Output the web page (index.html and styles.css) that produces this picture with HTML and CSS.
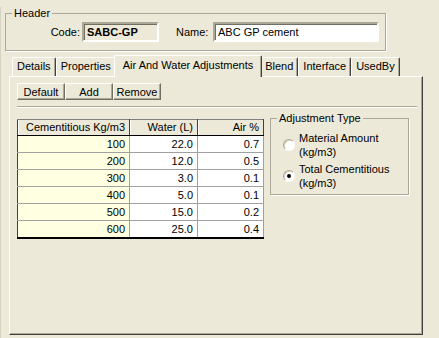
FILE: index.html
```html
<!DOCTYPE html>
<html lang="en">
<head>
    <meta charset="UTF-8">
    <title>Mix Design - SABC-GP</title>
    <link rel="stylesheet" href="styles.css">
</head>
<body>
    <div class="window">
        <fieldset class="group header-group">
            <legend>Header</legend>
            <div class="header-row">
                <span class="field-label code-label">Code:</span>
                <div class="textbox code-box">SABC-GP</div>
                <span class="field-label name-label">Name:</span>
                <div class="textbox name-box">ABC GP cement</div>
            </div>
        </fieldset>

        <div class="tabs">
            <div class="tab">Details</div>
            <div class="tab">Properties</div>
            <div class="tab active">Air And Water Adjustments</div>
            <div class="tab">Blend</div>
            <div class="tab">Interface</div>
            <div class="tab">UsedBy</div>
        </div>

        <div class="panel">
            <div class="toolbar">
                <button class="tool-btn">Default</button>
                <button class="tool-btn">Add</button>
                <button class="tool-btn">Remove</button>
            </div>
            <div class="separator"></div>

            <div class="content">
                <table class="grid">
                    <thead>
                        <tr>
                            <th class="col-cem">Cementitious Kg/m3</th>
                            <th class="col-water">Water (L)</th>
                            <th class="col-air">Air %</th>
                        </tr>
                    </thead>
                    <tbody>
                        <tr><td class="key">100</td><td>22.0</td><td>0.7</td></tr>
                        <tr><td class="key">200</td><td>12.0</td><td>0.5</td></tr>
                        <tr><td class="key">300</td><td>3.0</td><td>0.1</td></tr>
                        <tr><td class="key">400</td><td>5.0</td><td>0.1</td></tr>
                        <tr><td class="key">500</td><td>15.0</td><td>0.2</td></tr>
                        <tr><td class="key">600</td><td>25.0</td><td>0.4</td></tr>
                    </tbody>
                </table>

                <fieldset class="group adjust-group">
                    <legend>Adjustment Type</legend>
                    <div class="radio-list">
                        <div class="radio-item">
                            <span class="radio"></span>
                            <span class="radio-text">Material Amount (kg/m3)</span>
                        </div>
                        <div class="radio-item">
                            <span class="radio checked"></span>
                            <span class="radio-text">Total Cementitious (kg/m3)</span>
                        </div>
                    </div>
                </fieldset>
            </div>
        </div>
    </div>
</body>
</html>
```

FILE: styles.css
```css
* {
    margin: 0;
    padding: 0;
    box-sizing: border-box;
}

body {
    font-family: "Liberation Sans", Arial, sans-serif;
    font-size: 11px;
    color: #000;
    background: #ece9d8;
    width: 439px;
    height: 338px;
    overflow: hidden;
}

.window {
    height: 338px;
    border-left: 1px solid #d8d4c4;
}

/* group boxes */
.group {
    border: 1px solid #aca899;
    box-shadow: 1px 1px 0 #fff;
    min-width: 0;
}

.group legend {
    line-height: 13px;
    padding: 0 2px;
}

.header-group {
    margin: 7px 0 0 4px;
    width: 381px;
    height: 44px;
}

.header-group legend {
    margin-left: 6px;
}

.header-row {
    display: flex;
    align-items: center;
    padding-top: 2px;
}

.field-label {
    line-height: 20px;
}

.code-label {
    width: 74px;
    text-align: right;
    margin-right: 2px;
}

.name-label {
    margin-left: 17px;
    width: 37px;
}

.textbox {
    height: 20px;
    line-height: 16px;
    padding: 0 3px;
    border: 2px solid;
    border-color: #aca899 #fff #fff #aca899;
    box-shadow: inset 1px 1px 0 #716f64;
}

.code-box {
    width: 77px;
    font-weight: bold;
    background: #ece9d8;
}

.name-box {
    width: 166px;
    background: #fff;
}

/* tabs */
.tabs {
    display: flex;
    align-items: flex-end;
    height: 21px;
    margin: 4px 0 0 11px;
    position: relative;
    z-index: 1;
}

.tab {
    height: 19px;
    line-height: 17px;
    padding: 0 4px;
    border: 1px solid #fff;
    border-bottom: none;
    border-right-color: #404040;
    border-radius: 2px 2px 0 0;
    box-shadow: inset -1px 0 0 #aca899;
    background: #ece9d8;
    white-space: nowrap;
}

.tab.active {
    height: 22px;
    line-height: 18px;
    margin: 0 -1px -1px -2px;
    padding: 0 8px;
    position: relative;
    z-index: 2;
}

.tab.active + .tab {
    margin-left: -1px;
}

/* panel */
.panel {
    margin-left: 8px;
    width: 414px;
    height: 259px;
    border: 1px solid;
    border-color: #fff #404040 #404040 #fff;
    box-shadow: inset -1px -1px 0 #aca899;
    padding: 6px 5px 0 7px;
}

.toolbar {
    display: flex;
}

.tool-btn {
    width: 48px;
    height: 17px;
    font-family: inherit;
    font-size: 11px;
    background: #ece9d8;
    border: 1px solid;
    border-color: #fff #716f64 #716f64 #fff;
    box-shadow: inset -1px -1px 0 #aca899;
    line-height: 14px;
}

.separator {
    margin-top: 6px;
    border-top: 1px solid #aca899;
    border-bottom: 1px solid #fff;
}

.content {
    display: flex;
    align-items: flex-start;
    gap: 6px;
    margin-top: 4px;
}

/* grid */
.grid {
    margin-top: 7px;
    border-collapse: collapse;
    table-layout: fixed;
    width: 246px;
    border: 1px solid #404040;
    border-top-color: #808080;
    border-bottom: 2px solid #000;
    border-right-color: #000;
}

.grid th,
.grid td {
    text-align: right;
    padding: 0 4px 0 2px;
    font-weight: normal;
    white-space: nowrap;
}

.grid th {
    height: 16px;
    line-height: 15px;
    background: #ece9d8;
    border-bottom: 1px solid #000;
    border-right: 1px solid #404040;
    box-shadow: inset 1px 0 0 #fff;
}

.grid td {
    height: 17px;
    line-height: 16px;
    background: #fff;
    border-bottom: 1px solid #a0a0a0;
    border-right: 1px solid #a0a0a0;
}

.grid td.key {
    background: #ffffe1;
}

.col-cem {
    width: 112px;
}

.col-water {
    width: 68px;
}

.col-air {
    width: 66px;
}

/* adjustment type */
.adjust-group {
    width: 139px;
    height: 83px;
}

.adjust-group legend {
    margin-left: 6px;
}

.radio-list {
    display: flex;
    flex-direction: column;
    gap: 3px;
    padding: 6px 0 0 12px;
}

.radio-item {
    display: flex;
    align-items: center;
    gap: 4px;
}

.radio {
    width: 12px;
    height: 12px;
    border-radius: 50%;
    background: #fff;
    border: 1px solid;
    border-color: #aca899 #fff #fff #aca899;
    box-shadow: inset 1px 1px 0 #d8d4c4;
    display: flex;
    align-items: center;
    justify-content: center;
    flex-shrink: 0;
}

.radio.checked::after {
    content: "";
    width: 4px;
    height: 4px;
    border-radius: 50%;
    background: #000;
}

.radio-text {
    width: 100px;
    line-height: 14px;
}
```
